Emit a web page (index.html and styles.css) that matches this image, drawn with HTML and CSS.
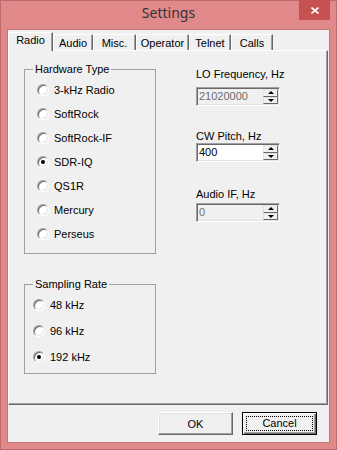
FILE: index.html
```html
<!DOCTYPE html>
<html lang="en">
<head>
    <meta charset="utf-8">
    <title>Settings</title>
    <link rel="stylesheet" href="styles.css">
</head>
<body>
    <div class="window">
        <div class="titlebar">
            <span></span>
            <span class="title">Settings</span>
            <button class="close" aria-label="Close">
                <svg width="8" height="7" viewBox="0 0 8 7">
                    <path d="M0.5 0.5 L7.5 6.5 M7.5 0.5 L0.5 6.5" stroke="#fff" stroke-width="1.6" fill="none"/>
                </svg>
            </button>
        </div>

        <div class="client">
            <div class="tabs">
                <div class="tab active tab-radio">Radio</div>
                <div class="tab tab-audio">Audio</div>
                <div class="tab tab-misc">Misc.</div>
                <div class="tab tab-operator">Operator</div>
                <div class="tab tab-telnet">Telnet</div>
                <div class="tab tab-calls">Calls</div>
            </div>

            <div class="panel">
                <div class="col-left">
                    <fieldset class="group hw">
                        <legend>Hardware Type</legend>
                        <div class="opt"><span class="radio"></span>3-kHz Radio</div>
                        <div class="opt"><span class="radio"></span>SoftRock</div>
                        <div class="opt"><span class="radio"></span>SoftRock-IF</div>
                        <div class="opt"><span class="radio checked"></span>SDR-IQ</div>
                        <div class="opt"><span class="radio"></span>QS1R</div>
                        <div class="opt"><span class="radio"></span>Mercury</div>
                        <div class="opt"><span class="radio"></span>Perseus</div>
                    </fieldset>

                    <fieldset class="group rate">
                        <legend>Sampling Rate</legend>
                        <div class="opt"><span class="radio"></span>48 kHz</div>
                        <div class="opt"><span class="radio"></span>96 kHz</div>
                        <div class="opt"><span class="radio checked"></span>192 kHz</div>
                    </fieldset>
                </div>

                <div class="col-right">
                    <div class="field-label lo-label">LO Frequency, Hz</div>
                    <div class="spin disabled lo-spin">
                        <span class="spin-value">21020000</span>
                        <span class="spin-btns"><span class="spin-btn up"></span><span class="spin-btn down"></span></span>
                    </div>

                    <div class="field-label cw-label">CW Pitch, Hz</div>
                    <div class="spin">
                        <span class="spin-value">400</span>
                        <span class="spin-btns"><span class="spin-btn up"></span><span class="spin-btn down"></span></span>
                    </div>

                    <div class="field-label if-label">Audio IF, Hz</div>
                    <div class="spin disabled if-spin">
                        <span class="spin-value">0</span>
                        <span class="spin-btns"><span class="spin-btn up"></span><span class="spin-btn down"></span></span>
                    </div>
                </div>
            </div>

            <div class="footer">
                <button class="btn">OK</button>
                <button class="btn default"><span class="focus">Cancel</span></button>
            </div>
        </div>
    </div>
</body>
</html>
```

FILE: styles.css
```css
* {
    box-sizing: border-box;
}

body {
    margin: 0;
    font-family: "Liberation Sans", Arial, sans-serif;
    font-size: 11px;
    color: #000;
}

.window {
    width: 337px;
    height: 450px;
    background-color: #e1888a;
    border: 1px solid #bd6c6e;
    padding: 0 6px 6px 6px;
    display: flex;
    flex-direction: column;
}

.titlebar {
    height: 28px;
    display: grid;
    grid-template-columns: 1fr auto 1fr;
    align-items: start;
}

.title {
    font-family: "Noto Sans", sans-serif;
    font-size: 14px;
    line-height: 20px;
    padding-top: 2px;
    color: #333;
}

.close {
    justify-self: end;
    width: 31px;
    height: 20px;
    margin-top: -1px;
    padding: 0;
    border: none;
    background-color: #c75050;
    display: flex;
    align-items: center;
    justify-content: center;
}

.client {
    flex: 1;
    background-color: #f0f0f0;
    border: 1px solid #c77678;
    display: flex;
    flex-direction: column;
}

/* tab strip */
.tabs {
    height: 20px;
    display: flex;
    align-items: flex-end;
}

.tab {
    height: 16px;
    padding-top: 2px;
    line-height: 13px;
    text-align: center;
    border-top: 1px solid #fff;
    border-left: 1px solid #fff;
    border-right: 1px solid #696969;
    box-shadow: inset -1px 0 0 #a0a0a0;
}

.tab.active {
    height: 19px;
    padding-top: 1px;
    margin-bottom: -1px;
    position: relative;
    z-index: 1;
    background-color: #f0f0f0;
}

.tab-radio { width: 45px; }
.tab-audio { width: 40px; }
.tab-misc { width: 43px; }
.tab-operator { width: 53px; }
.tab-telnet { width: 42px; }
.tab-calls { width: 42px; }

.panel {
    flex: 1;
    width: 320px;
    display: flex;
    padding-left: 15px;
    border: 1px solid;
    border-color: #fff #696969 #696969 #fff;
    box-shadow: inset -1px -1px 0 #a0a0a0;
}

/* group boxes */
.col-left {
    width: 132px;
    display: flex;
    flex-direction: column;
}

.group {
    margin: 0;
    min-width: 0;
    border: 1px solid #a0a0a0;
}

.group legend {
    margin-left: 8px;
    padding: 0 2px;
    line-height: 13px;
}

.hw {
    margin-top: 12px;
    padding: 2px 0 7px 0;
}

.rate {
    margin-top: 24px;
    padding: 1px 0 3px 0;
}

.opt {
    display: flex;
    align-items: center;
    gap: 5px;
}

.hw .opt {
    height: 24px;
    padding-left: 12px;
}

.rate .opt {
    height: 26px;
    padding-left: 8px;
}

.radio {
    flex: none;
    width: 12px;
    height: 12px;
    border-radius: 50%;
    background-color: #fff;
    border: 1px solid;
    border-color: #a0a0a0 #fff #fff #a0a0a0;
    box-shadow: inset 1px 1px 0 #696969, inset -1px -1px 0 #e3e3e3;
    display: flex;
    align-items: center;
    justify-content: center;
}

.radio.checked::after {
    content: "";
    width: 4px;
    height: 4px;
    border-radius: 50%;
    background-color: #000;
}

/* spin boxes */
.col-right {
    margin-left: 40px;
    display: flex;
    flex-direction: column;
    align-items: flex-start;
}

.field-label {
    line-height: 13px;
}

.lo-label { margin-top: 17px; }
.lo-spin { margin-top: 6px; }
.cw-label { margin-top: 24px; }
.if-label { margin-top: 26px; }
.if-spin { margin-top: 2px; }

.spin {
    width: 84px;
    height: 19px;
    display: flex;
    padding: 1px;
    background-color: #fff;
    border: 1px solid;
    border-color: #a0a0a0 #fff #fff #a0a0a0;
    box-shadow: inset 1px 1px 0 #696969, inset -1px -1px 0 #e3e3e3;
}

.spin.disabled {
    background-color: #f0f0f0;
    color: #6d6d6d;
}

.spin-value {
    flex: 1;
    padding-left: 1px;
    line-height: 15px;
}

.spin-btns {
    width: 15px;
    display: flex;
    flex-direction: column;
}

.spin-btn {
    flex: 1;
    background-color: #f0f0f0;
    border: 1px solid;
    border-color: #e3e3e3 #696969 #696969 #e3e3e3;
    display: flex;
    align-items: center;
    justify-content: center;
}

.spin-btn.up::after {
    content: "";
    border-left: 3px solid transparent;
    border-right: 3px solid transparent;
    border-bottom: 3px solid #000;
}

.spin-btn.down::after {
    content: "";
    border-left: 3px solid transparent;
    border-right: 3px solid transparent;
    border-top: 3px solid #000;
}

/* dialog buttons */
.footer {
    display: flex;
    justify-content: flex-end;
    gap: 9px;
    padding: 7px 12px 7px 0;
}

.btn {
    width: 75px;
    height: 23px;
    padding: 0;
    font: inherit;
    color: #000;
    background-color: #f0f0f0;
    border: 1px solid;
    border-color: #fff #696969 #696969 #fff;
    box-shadow: inset -1px -1px 0 #a0a0a0, inset 1px 1px 0 #e3e3e3;
}

.btn.default {
    padding: 3px;
    border: 1px solid #000;
    box-shadow: inset 1px 1px 0 #fff, inset -1px -1px 0 #696969, inset -2px -2px 0 #a0a0a0;
}

.focus {
    display: block;
    height: 100%;
    line-height: 13px;
    border: 1px dotted #000;
}
```
